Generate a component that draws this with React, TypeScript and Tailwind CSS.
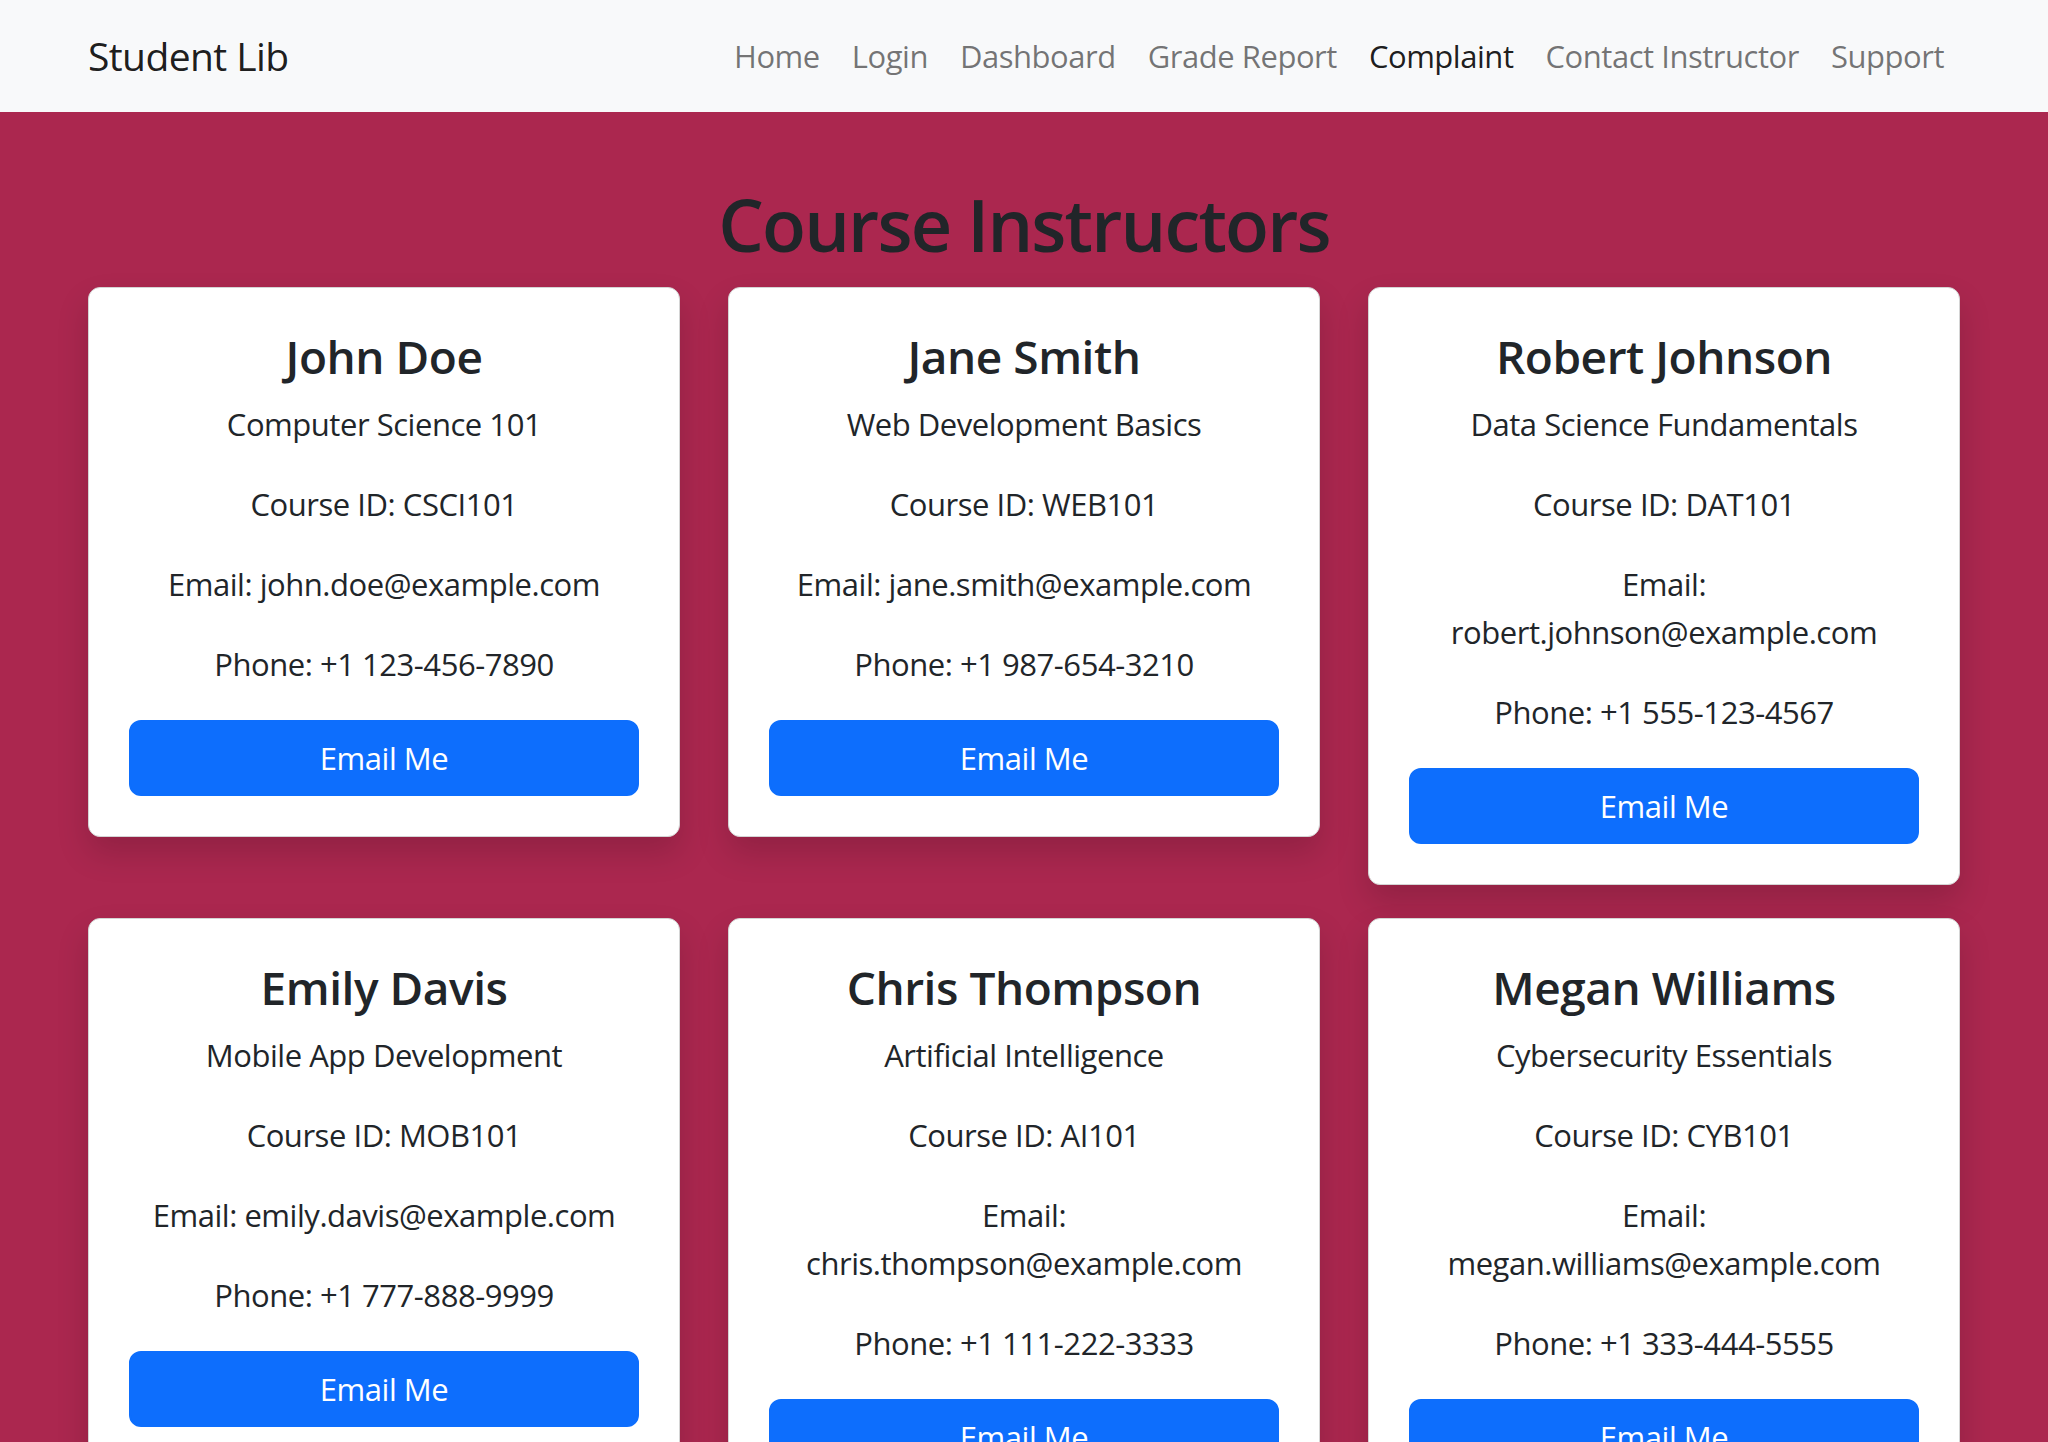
const links = [
  { label: 'Home' },
  { label: 'Login' },
  { label: 'Dashboard' },
  { label: 'Grade Report' },
  { label: 'Complaint', active: true },
  { label: 'Contact Instructor' },
  { label: 'Support' },
];

const instructors = [
  {
    name: 'John Doe',
    course: 'Computer Science 101',
    id: 'CSCI101',
    email: 'john.doe@example.com',
    phone: '+1 123-456-7890',
  },
  {
    name: 'Jane Smith',
    course: 'Web Development Basics',
    id: 'WEB101',
    email: 'jane.smith@example.com',
    phone: '+1 987-654-3210',
  },
  {
    name: 'Robert Johnson',
    course: 'Data Science Fundamentals',
    id: 'DAT101',
    email: 'robert.johnson@example.com',
    phone: '+1 555-123-4567',
  },
  {
    name: 'Emily Davis',
    course: 'Mobile App Development',
    id: 'MOB101',
    email: 'emily.davis@example.com',
    phone: '+1 777-888-9999',
  },
  {
    name: 'Chris Thompson',
    course: 'Artificial Intelligence',
    id: 'AI101',
    email: 'chris.thompson@example.com',
    phone: '+1 111-222-3333',
  },
  {
    name: 'Megan Williams',
    course: 'Cybersecurity Essentials',
    id: 'CYB101',
    email: 'megan.williams@example.com',
    phone: '+1 333-444-5555',
  },
];

type Instructor = (typeof instructors)[number];

const InstructorCard = ({ item }: { item: Instructor }) => (
  <div className="rounded-[12px] border border-[#d4d4d4] bg-white p-[40px] text-center text-[#212529] shadow-[0_16px_32px_rgba(0,0,0,0.15)]">
    <h3 className="mb-[16px] text-[46px] font-semibold leading-[56px] tracking-[-0.01em]">
      {item.name}
    </h3>
    <div className="text-[31px] leading-[48px] tracking-[-0.015em]">
      <p className="mb-[32px]">{item.course}</p>
      <p className="mb-[32px]">Course ID: {item.id}</p>
      <p className="mb-[32px]">Email: {item.email}</p>
      <p className="mb-[32px]">Phone: {item.phone}</p>
      <button
        type="button"
        className="block h-[76px] w-full rounded-[12px] border-2 border-[#0d6efd] bg-[#0d6efd] text-white"
      >
        Email Me
      </button>
    </div>
  </div>
);

const App = () => {
  return (
    <div className="min-h-screen bg-[#ab274f] font-['Open_Sans',sans-serif]">
      <nav className="bg-[#f8f9fa]">
        <div className="mx-auto flex h-[112px] max-w-[1920px] items-center justify-between px-[24px]">
          <span className="text-[39px] tracking-[-0.015em] text-black/90">Student Lib</span>
          <ul className="flex">
            {links.map((link) => (
              <li key={link.label}>
                <a
                  href="#"
                  className={`block px-[16px] text-[31px] leading-[48px] tracking-[-0.015em] ${
                    link.active ? 'text-black/90' : 'text-black/55'
                  }`}
                >
                  {link.label}
                </a>
              </li>
            ))}
          </ul>
        </div>
      </nav>
      <div className="mx-auto max-w-[1920px] px-[24px] pb-[48px] pt-[64px]">
        <h1 className="mb-[15px] text-center text-[72px] font-semibold leading-[96px] tracking-[-0.025em] text-[#212529]">
          Course Instructors
        </h1>
        <div className="grid grid-cols-3 items-start gap-x-[48px] gap-y-[33px]">
          {instructors.map((item) => (
            <InstructorCard key={item.id} item={item} />
          ))}
        </div>
      </div>
    </div>
  );
};
export default App;
